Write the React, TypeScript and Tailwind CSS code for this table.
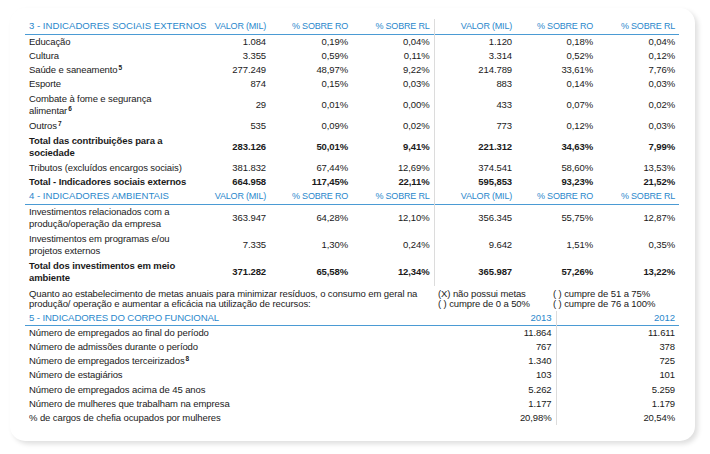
import type { ReactNode } from "react";

type Row = {
  label: ReactNode;
  values: string[];
  bold?: boolean;
  tall?: boolean;
};

const Sup = ({ n }: { n: string }) => (
  <span className="relative -top-[3px] text-[6.5px] font-bold leading-none ml-[1px]">{n}</span>
);

const social: Row[] = [
  { label: "Educação", values: ["1.084", "0,19%", "0,04%", "1.120", "0,18%", "0,04%"] },
  { label: "Cultura", values: ["3.355", "0,59%", "0,11%", "3.314", "0,52%", "0,12%"] },
  {
    label: (
      <>
        Saúde e saneamento<Sup n="5" />
      </>
    ),
    values: ["277.249", "48,97%", "9,22%", "214.789", "33,61%", "7,76%"],
  },
  { label: "Esporte", values: ["874", "0,15%", "0,03%", "883", "0,14%", "0,03%"] },
  {
    label: (
      <>
        Combate à fome e segurança
        <br />
        alimentar<Sup n="6" />
      </>
    ),
    values: ["29", "0,01%", "0,00%", "433", "0,07%", "0,02%"],
    tall: true,
  },
  {
    label: (
      <>
        Outros<Sup n="7" />
      </>
    ),
    values: ["535", "0,09%", "0,02%", "773", "0,12%", "0,03%"],
  },
  {
    label: (
      <>
        Total das contribuições para a
        <br />
        sociedade
      </>
    ),
    values: ["283.126", "50,01%", "9,41%", "221.312", "34,63%", "7,99%"],
    bold: true,
    tall: true,
  },
  {
    label: "Tributos (excluídos encargos sociais)",
    values: ["381.832", "67,44%", "12,69%", "374.541", "58,60%", "13,53%"],
  },
  {
    label: "Total - Indicadores sociais externos",
    values: ["664.958", "117,45%", "22,11%", "595,853", "93,23%", "21,52%"],
    bold: true,
  },
];

const ambient: Row[] = [
  {
    label: (
      <>
        Investimentos relacionados com a
        <br />
        produção/operação da empresa
      </>
    ),
    values: ["363.947", "64,28%", "12,10%", "356.345", "55,75%", "12,87%"],
    tall: true,
  },
  {
    label: (
      <>
        Investimentos em programas e/ou
        <br />
        projetos externos
      </>
    ),
    values: ["7.335", "1,30%", "0,24%", "9.642", "1,51%", "0,35%"],
    tall: true,
  },
  {
    label: (
      <>
        Total dos investimentos em meio
        <br />
        ambiente
      </>
    ),
    values: ["371.282", "65,58%", "12,34%", "365.987", "57,26%", "13,22%"],
    bold: true,
    tall: true,
  },
];

const staff: { label: ReactNode; a: string; b: string }[] = [
  { label: "Número de empregados ao final do período", a: "11.864", b: "11.611" },
  { label: "Número de admissões durante o período", a: "767", b: "378" },
  {
    label: (
      <>
        Número de empregados terceirizados<Sup n="8" />
      </>
    ),
    a: "1.340",
    b: "725",
  },
  { label: "Número de estagiários", a: "103", b: "101" },
  { label: "Número de empregados acima de 45 anos", a: "5.262", b: "5.259" },
  { label: "Número de mulheres que trabalham na empresa", a: "1.177", b: "1.179" },
  { label: "% de cargos de chefia ocupados por mulheres", a: "20,98%", b: "20,54%" },
];

const heads = ["VALOR (MIL)", "% SOBRE RO", "% SOBRE RL", "VALOR (MIL)", "% SOBRE RO", "% SOBRE RL"];

const HeaderRow = ({ title }: { title: string }) => (
  <tr className="border-b border-[#4b9bd4] text-[#2a88cc] text-[9px] tracking-[-0.2px]">
    <td className="h-[15px] pl-[4px] whitespace-nowrap text-[9.6px] tracking-normal">{title}</td>
    {heads.map((h, i) => (
      <td
        key={i}
        className={`text-right pr-[4px] whitespace-nowrap ${i === 2 ? "border-r border-[#dcdcdc]" : ""}`}
      >
        {h}
      </td>
    ))}
  </tr>
);

const DataRow = ({ row }: { row: Row }) => (
  <tr className={row.bold ? "font-bold" : ""}>
    <td
      className={`pl-[4px] whitespace-nowrap ${
        row.tall ? (row.bold ? "h-[28px] leading-[12px]" : "h-[27px] leading-[12px]") : "h-[14.2px]"
      }`}
    >
      {row.label}
    </td>
    {row.values.map((v, i) => (
      <td
        key={i}
        className={`text-right pr-[4px] whitespace-nowrap ${i === 2 ? "border-r border-[#dcdcdc]" : ""}`}
      >
        {v}
      </td>
    ))}
  </tr>
);

export default function App() {
  return (
    <div className="w-[710px] h-[454px] bg-white pt-[8px] pl-[10px] font-['Liberation_Sans',Arial,sans-serif] text-[9.5px] text-[#1a1a1a] tracking-[-0.1px]">
      <div className="w-[685px] h-[433px] bg-white rounded-[15px] shadow-[3px_3px_5px_rgba(0,0,0,0.13)] pt-[11px] pl-[15px]">
        <table className="table-fixed border-collapse w-[654px]">
          <colgroup>
            <col className="w-[163px]" />
            <col className="w-[82px]" />
            <col className="w-[82px]" />
            <col className="w-[82px]" />
            <col className="w-[82px]" />
            <col className="w-[81px]" />
            <col className="w-[82px]" />
          </colgroup>
          <tbody>
            <HeaderRow title="3 - INDICADORES SOCIAIS EXTERNOS" />
            {social.map((r, i) => (
              <DataRow key={i} row={r} />
            ))}
            <HeaderRow title="4 - INDICADORES AMBIENTAIS" />
            {ambient.map((r, i) => (
              <DataRow key={i} row={r} />
            ))}
          </tbody>
        </table>

        <table className="table-fixed border-collapse w-[654px]">
          <colgroup>
            <col className="w-[409px]" />
            <col className="w-[122px]" />
            <col className="w-[123px]" />
          </colgroup>
          <tbody>
            <tr className="leading-[10px]">
              <td className="h-[25px] pl-[4px] whitespace-nowrap">
                Quanto ao estabelecimento de metas anuais para minimizar resíduos, o consumo em geral na
                <br />
                produção/ operação e aumentar a eficácia na utilização de recursos:
              </td>
              <td className="pl-[4px] whitespace-nowrap">
                (X) não possui metas
                <br />( ) cumpre de 0 a 50%
              </td>
              <td className="pl-0 -translate-x-[3px] whitespace-nowrap">
                ( ) cumpre de 51 a 75%
                <br />( ) cumpre de 76 a 100%
              </td>
            </tr>
            <tr className="border-b border-[#4b9bd4] text-[#2a88cc] text-[9.6px] leading-[12px]">
              <td className="h-[14px] pl-[4px] whitespace-nowrap">5 - INDICADORES DO CORPO FUNCIONAL</td>
              <td className="text-right pr-[4px] border-r border-[#dcdcdc]">2013</td>
              <td className="text-right pr-[4px]">2012</td>
            </tr>
            {staff.map((r, i) => (
              <tr key={i} className="leading-[12px]">
                <td className="h-[14.3px] pl-[4px] whitespace-nowrap">{r.label}</td>
                <td className="text-right pr-[4px] border-r border-[#dcdcdc]">{r.a}</td>
                <td className="text-right pr-[4px]">{r.b}</td>
              </tr>
            ))}
          </tbody>
        </table>
      </div>
    </div>
  );
}
